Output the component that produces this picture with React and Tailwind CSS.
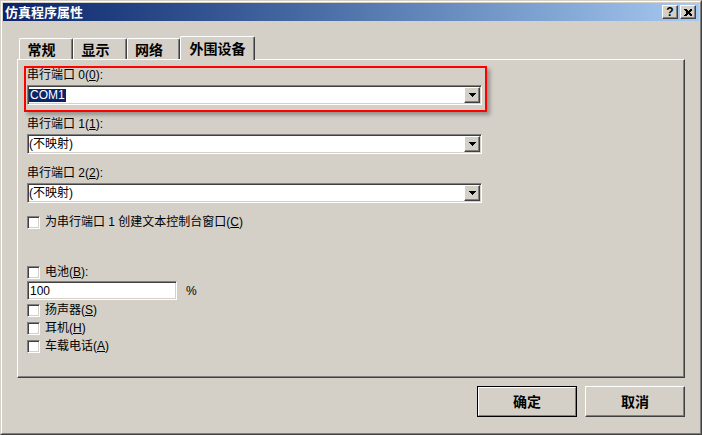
import React from "react";

const font = "font-['Liberation_Sans','Noto_Sans_CJK_SC',sans-serif]";
const sunken =
  "border border-t-[#808080] border-l-[#808080] border-b-white border-r-white shadow-[inset_1px_1px_#404040,inset_-1px_-1px_#d4d0c8] bg-white";
const raised =
  "border border-t-white border-l-white border-b-[#404040] border-r-[#404040] shadow-[inset_-1px_-1px_#808080] bg-[#d4d0c8]";

const Arrow = () => (
  <svg width="7" height="4" shapeRendering="crispEdges">
    <rect x="0" y="0" width="7" height="1" fill="#000" />
    <rect x="1" y="1" width="5" height="1" fill="#000" />
    <rect x="2" y="2" width="3" height="1" fill="#000" />
    <rect x="3" y="3" width="1" height="1" fill="#000" />
  </svg>
);

const Combo = ({ children }) => (
  <div className={`flex h-[20px] w-[455px] p-px ${sunken}`}>
    <div className="flex flex-1 items-center text-[12px] leading-none text-black">{children}</div>
    <div className={`flex h-full w-[16px] items-center justify-center ${raised}`}>
      <Arrow />
    </div>
  </div>
);

const Check = ({ children, className = "" }) => (
  <div className={`flex h-[14px] items-center gap-[5px] ${className}`}>
    <div className={`h-[13px] w-[13px] ${sunken}`} />
    <span className="text-[12px] leading-none">{children}</span>
  </div>
);

const Tab = ({ label, width, active }) => (
  <div
    className={`flex items-center justify-center rounded-t-[2px] border-t border-l border-r border-t-white border-l-white border-r-[#404040] shadow-[inset_-1px_0_#808080] bg-[#d4d0c8] text-[14px] font-bold leading-none ${
      active ? "relative z-10 -mb-px h-[24px]" : "h-[21px] pt-[2px] pr-[9px]"
    } ${width}`}
  >
    {label}
  </div>
);

export default function App() {
  return (
    <div className={`${font} h-[435px] w-[702px] select-none border border-t-[#d4d0c8] border-l-[#d4d0c8] border-b-[#404040] border-r-[#404040] bg-[#d4d0c8] text-black`}>
      <div className="flex h-full flex-col border border-t-white border-l-white border-b-[#808080] border-r-[#808080] p-px">
        {/* title bar */}
        <div className="flex h-[18px] items-center bg-linear-to-r from-[#0a246a] to-[#a6caf0] pl-[2px] pr-[3px]">
          <span className="text-[13px] font-bold leading-none text-white">仿真程序属性</span>
          <div className="ml-auto flex gap-[2px]">
            <div className={`flex h-[14px] w-[16px] items-center justify-center text-[12px] font-bold leading-none ${raised}`}>?</div>
            <div className={`flex h-[14px] w-[16px] items-center justify-center ${raised}`}>
              <svg width="8" height="7" shapeRendering="crispEdges">
                <path d="M0 0h2l2 2 2-2h2v1l-2 2v1l2 2v1h-2l-2-2-2 2h-2v-1l2-2v-1l-2-2z" fill="#000" />
              </svg>
            </div>
          </div>
        </div>

        <div className="px-[14px] pt-[15px]">
          {/* tabs */}
          <div className="flex h-[23px] items-end pl-[2px]">
            <Tab label="常规" width="w-[54px]" />
            <Tab label="显示" width="w-[54px]" />
            <Tab label="网络" width="w-[53px]" />
            <Tab label="外围设备" width="w-[75px]" active />
          </div>

          {/* panel */}
          <div className="relative h-[319px] border border-t-white border-l-white border-b-[#404040] border-r-[#404040] shadow-[inset_-1px_-1px_#808080] pl-[9px] pt-[8px]">
            <div className="pointer-events-none absolute left-[6px] top-[6px] h-[46px] w-[463px] border-2 border-[#ff0000] shadow-[3px_3px_4px_rgba(0,0,0,0.3)]" />

            <div className="h-[14px] text-[12px] leading-[14px]">
              串行端口 0(<u>0</u>):
            </div>
            <div className="mt-[3px]">
              <Combo>
                <span className="bg-[#0a246a] px-px py-px leading-[11px] text-white">COM1</span>
              </Combo>
            </div>

            <div className="mt-[12px] h-[14px] text-[12px] leading-[14px]">
              串行端口 1(<u>1</u>):
            </div>
            <div className="mt-[3px]">
              <Combo>(不映射)</Combo>
            </div>

            <div className="mt-[12px] h-[14px] text-[12px] leading-[14px]">
              串行端口 2(<u>2</u>):
            </div>
            <div className="mt-[3px]">
              <Combo>(不映射)</Combo>
            </div>

            <Check className="mt-[12px]">
              为串行端口 1 创建文本控制台窗口(<u>C</u>)
            </Check>

            <Check className="mt-[36px]">
              电池(<u>B</u>):
            </Check>
            <div className="mt-[2px] flex items-center gap-[9px]">
              <div className={`flex h-[19px] w-[150px] items-center pl-[2px] text-[12px] leading-none ${sunken}`}>100</div>
              <span className="text-[12px] leading-none">%</span>
            </div>
            <Check className="mt-[3px]">
              扬声器(<u>S</u>)
            </Check>
            <Check className="mt-[4px]">
              耳机(<u>H</u>)
            </Check>
            <Check className="mt-[4px]">
              车载电话(<u>A</u>)
            </Check>
          </div>

          {/* buttons */}
          <div className="mt-[8px] flex justify-end gap-[8px]">
            <div className="h-[31px] w-[100px] border border-black">
              <div className="flex h-full items-center justify-center border border-t-white border-l-white border-b-[#808080] border-r-[#808080] text-[14px] font-bold leading-none">
                确定
              </div>
            </div>
            <div className={`flex h-[31px] w-[100px] items-center justify-center text-[14px] font-bold leading-none ${raised}`}>
              取消
            </div>
          </div>
        </div>
      </div>
    </div>
  );
}
